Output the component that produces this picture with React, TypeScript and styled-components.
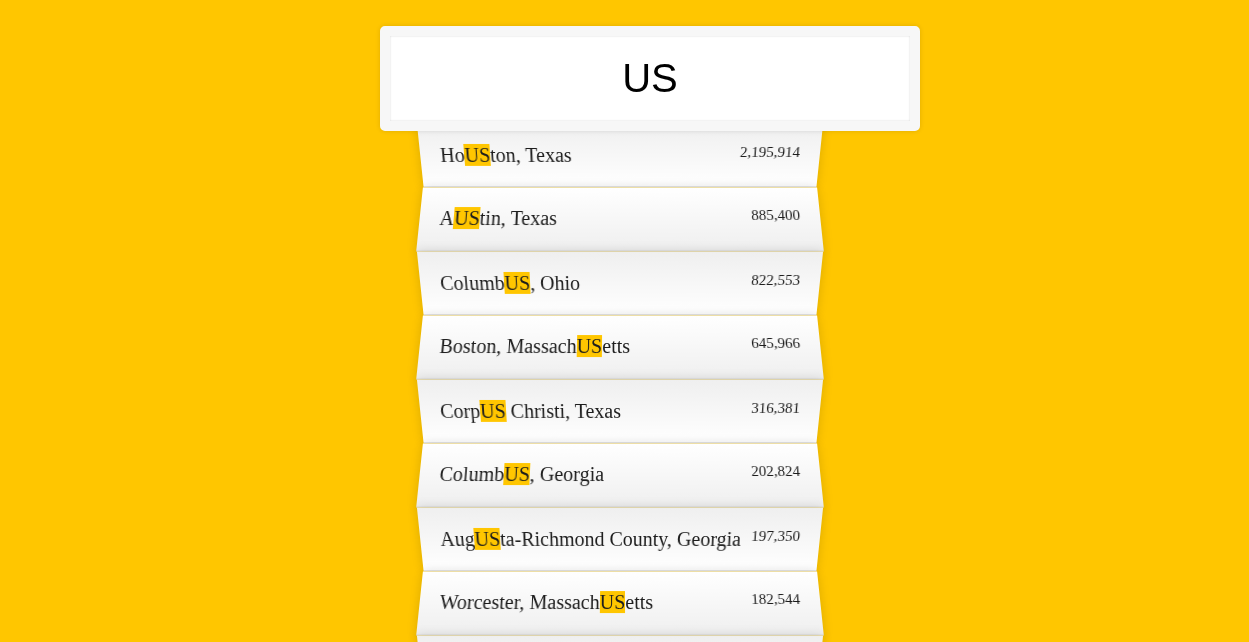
import React, { useEffect, useRef, useState } from "react";
import styled, { createGlobalStyle } from "styled-components";

const GlobalStyle = createGlobalStyle`
  html {
    box-sizing: border-box;
    background: #ffc600;
    font-family: "Liberation Serif", "Times New Roman", serif;
    font-size: 20px;
    font-weight: 200;
    overflow: hidden;
  }
  *, *::before, *::after { box-sizing: inherit; }
  body { margin: 0; }
`;

const Page = styled.div`
  display: flex;
  justify-content: center;
  padding-right: 9px;
`;

const SearchForm = styled.form`
  width: 400px;
  margin: 16px 0 0;
`;

const SearchInput = styled.input`
  box-sizing: content-box;
  display: block;
  margin: 0;
  padding: 20px;
  width: 120%;
  position: relative;
  left: -10%;
  top: 10px;
  z-index: 2;
  text-align: center;
  outline: 0;
  border: 10px solid #f7f7f7;
  border-radius: 5px;
  background: #fff;
  color: #000;
  caret-color: #000;
  font-family: "Liberation Sans", Arial, sans-serif;
  font-size: 40px;
  box-shadow: 0 0 5px rgba(0, 0, 0, 0.12), inset 0 0 2px rgba(0, 0, 0, 0.19);
`;

const SuggestionList = styled.ul`
  margin: 0;
  padding: 0;
  position: relative;
`;

const Suggestion = styled.li<{ $even: boolean }>`
  list-style: none;
  border-bottom: 1px solid #d8d8d8;
  box-shadow: 0 0 10px rgba(0, 0, 0, 0.14);
  margin: 0;
  padding: 20px;
  display: flex;
  justify-content: space-between;
  text-transform: capitalize;
  color: #1c1c1c;
  transform: ${(p) =>
    p.$even
      ? "perspective(100px) rotateX(3deg) translateY(2px) scale(1.001)"
      : "perspective(100px) rotateX(-3deg) translateY(3px)"};
  background: ${(p) =>
    p.$even
      ? "linear-gradient(to bottom, #ffffff 0%, #efefef 100%)"
      : "linear-gradient(to top, #ffffff 0%, #efefef 100%)"};
`;

const Name = styled.span``;

const Highlight = styled.span`
  background: #ffc600;
`;

const Population = styled.span`
  font-size: 15px;
`;

type Place = { city: string; state: string; population: number };

const places: Place[] = [
  { city: "Houston", state: "Texas", population: 2195914 },
  { city: "Austin", state: "Texas", population: 885400 },
  { city: "Columbus", state: "Ohio", population: 822553 },
  { city: "Boston", state: "Massachusetts", population: 645966 },
  { city: "Corpus Christi", state: "Texas", population: 316381 },
  { city: "Columbus", state: "Georgia", population: 202824 },
  { city: "Augusta-Richmond County", state: "Georgia", population: 197350 },
  { city: "Worcester", state: "Massachusetts", population: 182544 },
  { city: "Springfield", state: "Massachusetts", population: 153703 },
];

const withCommas = (n: number) => n.toString().replace(/\B(?=(\d{3})+(?!\d))/g, ",");

const highlight = (text: string, query: string) => {
  if (!query) return [text];
  const re = new RegExp(query, "gi");
  const parts = text.split(re);
  const out: React.ReactNode[] = [];
  parts.forEach((part, i) => {
    out.push(part);
    if (i < parts.length - 1) out.push(<Highlight key={i}>{query}</Highlight>);
  });
  return out;
};

export default function App() {
  const [query, setQuery] = useState("US");
  const inputRef = useRef<HTMLInputElement>(null);
  useEffect(() => {
    const el = inputRef.current;
    if (el) {
      el.focus();
      el.setSelectionRange(el.value.length, el.value.length);
    }
  }, []);
  const re = new RegExp(query, "i");
  const matches = places.filter((p) => re.test(p.city) || re.test(p.state));
  return (
    <Page>
      <GlobalStyle />
      <SearchForm onSubmit={(e) => e.preventDefault()}>
        <SearchInput
          ref={inputRef}
          type="text"
          value={query}
          autoFocus
          onChange={(e) => setQuery(e.target.value)}
        />
        <SuggestionList>
          {matches.map((p, i) => (
            <Suggestion key={p.city + p.state} $even={i % 2 === 1}>
              <Name>
                {highlight(p.city, query)}, {highlight(p.state, query)}
              </Name>
              <Population>{withCommas(p.population)}</Population>
            </Suggestion>
          ))}
        </SuggestionList>
      </SearchForm>
    </Page>
  );
}
